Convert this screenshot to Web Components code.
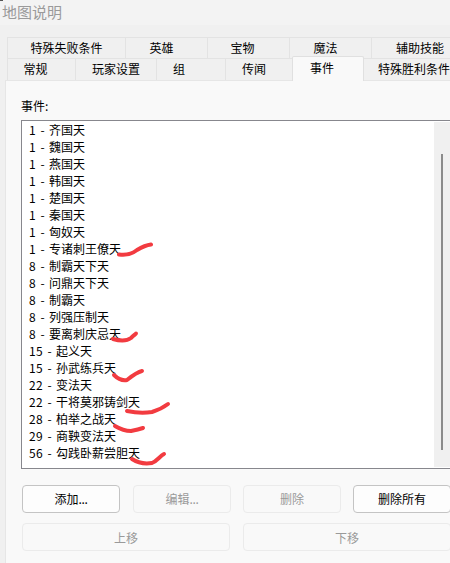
<!DOCTYPE html>
<html lang="zh"><head><meta charset="utf-8">
<style>
html,body{margin:0;padding:0;width:450px;height:563px;overflow:hidden;background:#f0f0f0}
body{font:12px/17px "Noto Sans CJK SC","Open Sans",sans-serif;color:#000}
</style></head><body>
<map-dialog></map-dialog>
<script>
const def=(n,html)=>{customElements.define(n,class extends HTMLElement{constructor(){super();this.attachShadow({mode:'open'}).innerHTML=html}})};
def('title-bar',`<style>:host{display:block;position:relative;height:25px;background:#f3f3f3;color:#9a9a9a;font-size:15px;line-height:24px;padding-left:2px}
:host::before{content:"";position:absolute;left:0;top:0;width:3px;height:1px;background:#555}</style><slot></slot>`);
def('tab-item',`<style>:host{display:flex;align-items:center;justify-content:center;box-sizing:border-box;height:100%;flex:none;background:#f0f0f0;border:1px solid #e3e3e3;border-bottom:0;margin-right:-1px;white-space:nowrap;font-size:12px;padding-bottom:2px}
:host([active]){background:#f9f9f9;height:25px;margin-top:-2px;position:relative;z-index:2;border-radius:2px 2px 0 0;padding-bottom:4px;border-color:#e0e0e0}</style><slot></slot>`);
def('tab-row',`<style>:host{display:flex;height:21px;padding-left:7px}</style><slot></slot>`);
def('event-row',`<style>:host{display:flex;height:17px;line-height:17px;white-space:pre}span{display:inline-block}.n{letter-spacing:.35px}.d{width:13px;text-align:center}
</style><span class="n"><slot name="n"></slot></span><span class="d">-</span><slot></slot>`);
def('event-list',`<style>:host{display:block;position:relative;box-sizing:border-box;height:349px;width:440px;background:#fff;border:1px solid #87878d;border-width:1px 0 1px 1px;padding:0 0 0 7px;overflow:hidden}
.bar{position:absolute;left:412px;top:1px;bottom:1px;width:28px;background:#f0f0f0}
.thumb{position:absolute;left:7px;top:32px;width:2px;height:296px;background:#8b8b8b}
</style><slot></slot><div class="bar"><div class="thumb"></div></div>`);
def('ui-button',`<style>:host{display:flex;align-items:center;justify-content:center;box-sizing:border-box;height:28px;background:#fdfdfd;border:1px solid #c4c4c4;border-radius:4px;font-size:12px;color:#000;padding-bottom:var(--pb,0)}
:host([disabled]){background:#f9f9f9;border-color:#ebebeb;color:#9a9a9a}</style><slot></slot>`);
def('scribble-layer',`<style>:host{position:absolute;left:0;top:0;width:450px;height:563px;pointer-events:none;z-index:5}svg{display:block}path{fill:none;stroke:#f23b40;stroke-width:4;stroke-linecap:round;stroke-linejoin:round}</style>
<svg width="450" height="563" viewBox="0 0 450 563">
<path d="M119 254.500C126 255.500 132 254 137 250C142 247 147 245 151 244.500"/>
<path d="M113 339C120 341 127 341 131 338C134 335 136 334 136 333.500"/>
<path d="M114 375C118 379 122 381 127 380C132 376 137 372 142 371"/>
<path d="M127 411C136 413 146 413 152 412C159 410 164 407 168 404"/>
<path d="M115 426C120 429 125 431 131 431C136 430 140 429 143 428"/>
<path d="M132 459C138 463 146 464 152 463C157 461 160 456 164 454"/>
</svg>`);
const rows=[[1,'齐国天'],[1,'魏国天'],[1,'燕国天'],[1,'韩国天'],[1,'楚国天'],[1,'秦国天'],[1,'匈奴天'],[1,'专诸刺王僚天'],[8,'制霸天下天'],[8,'问鼎天下天'],[8,'制霸天'],[8,'列强压制天'],[8,'要离刺庆忌天'],[15,'起义天'],[15,'孙武练兵天'],[22,'变法天'],[22,'干将莫邪铸剑天'],[28,'柏举之战天'],[29,'商鞅变法天'],[56,'勾践卧薪尝胆天']];
def('map-dialog',`<style>:host{display:block;position:relative;width:450px;height:563px;overflow:hidden;background:#f0f0f0}
.tabs{padding-top:12px}
.pane{box-sizing:border-box;margin-left:5px;width:450px;height:490px;background:#f9f9f9;border:1px solid #e6e6e6;border-width:1px 0 0 1px;padding:16px 0 0 15px}
.label{height:23px;line-height:17px}
.btns{display:grid;grid-template-columns:111px 110px 110px 98px;margin-top:16px;margin-left:1px;--pb:2px}
.btns ui-button{width:98px}
.btns2{display:grid;grid-template-columns:208px 208px;column-gap:13px;margin-top:10px;margin-left:1px}
.dots{letter-spacing:-.4px}
</style>
<title-bar>地图说明</title-bar>
<div class="tabs">
<tab-row><tab-item style="width:119px">特殊失败条件</tab-item><tab-item style="width:83px;padding-right:10px">英雄</tab-item><tab-item style="width:83px;padding-right:12px">宝物</tab-item><tab-item style="width:83px;padding-right:10px">魔法</tab-item><tab-item style="width:90px;justify-content:flex-start;padding-left:24px">辅助技能</tab-item></tab-row>
<tab-row style="height:22px"><tab-item style="width:69px;padding-right:12px">常规</tab-item><tab-item style="width:82px">玩家设置</tab-item><tab-item style="width:70px;padding-right:24px">组</tab-item><tab-item style="width:68px;padding-right:10px">传闻</tab-item><tab-item active style="width:72px;padding-right:12px">事件</tab-item><tab-item style="width:90px;justify-content:flex-start;padding-left:14px">特殊胜利条件</tab-item></tab-row>
</div>
<div class="pane">
<div class="label">事件:</div>
<event-list>${rows.map(r=>`<event-row><span slot="n">${r[0]}</span>${r[1]}</event-row>`).join('')}</event-list>
<div class="btns"><ui-button>添加<span class="dots">...</span></ui-button><ui-button disabled>编辑<span class="dots">...</span></ui-button><ui-button disabled>删除</ui-button><ui-button>删除所有</ui-button></div>
<div class="btns2"><ui-button disabled>上移</ui-button><ui-button disabled>下移</ui-button></div>
</div>
<scribble-layer></scribble-layer>`);
</script>
</body></html>
